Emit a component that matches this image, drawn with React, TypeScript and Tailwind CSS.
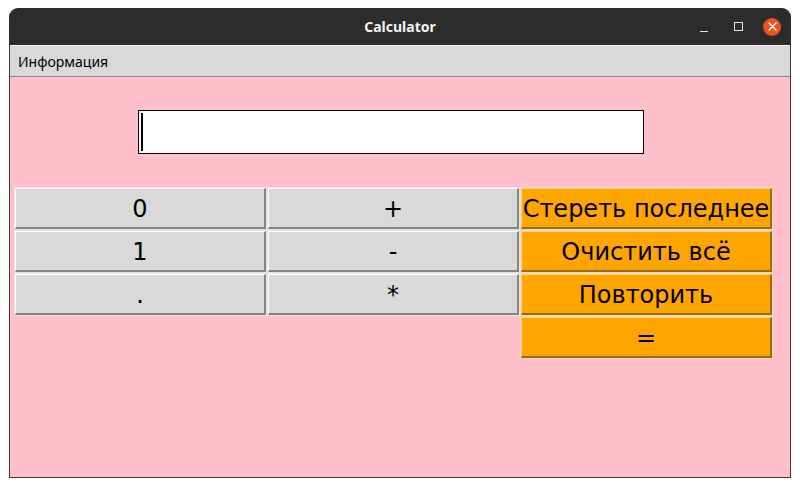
import React from 'react'

type Btn = { label: string; kind: 'gray' | 'orange' } | null

const cells: Btn[] = [
  { label: '0', kind: 'gray' },
  { label: '+', kind: 'gray' },
  { label: 'Стереть последнее', kind: 'orange' },
  { label: '1', kind: 'gray' },
  { label: '-', kind: 'gray' },
  { label: 'Очистить всё', kind: 'orange' },
  { label: '.', kind: 'gray' },
  { label: '*', kind: 'gray' },
  { label: 'Повторить', kind: 'orange' },
  null,
  null,
  { label: '=', kind: 'orange' },
]

function CalcButton({ btn }: { btn: Btn }) {
  if (!btn) return <div className="h-[43px]" />
  const orange = btn.kind === 'orange'
  return (
    <div className={`h-[43px] p-px ${orange ? 'bg-[#e4dcc4]' : 'bg-[#e8e4e4]'}`}>
      <button
        className={`w-full h-full flex items-center justify-center pt-[2px] text-[24px] text-black leading-none whitespace-nowrap overflow-hidden ${
          orange
            ? 'bg-[#ffa500] border-t border-l border-[#ffd27a] border-r-2 border-b-2 border-r-[#9c6a10] border-b-[#9c6a10]'
            : 'bg-[#d9d9d9] border-t border-l border-white border-r-2 border-b-2 border-r-[#858585] border-b-[#858585]'
        }`}
        style={{ fontFamily: '"DejaVu Sans", sans-serif' }}
      >
        {btn.label}
      </button>
    </div>
  )
}

export default function App() {
  return (
    <div className="w-[800px] h-[487px] bg-white pt-[8px] pl-[9px]">
      <div className="w-[782px] h-[470px] flex flex-col">
        <div className="h-[37px] bg-[#2c2c2c] rounded-t-[9px] relative flex items-center justify-center">
          <span
            className="text-[14px] font-bold text-[#f2f2f2]"
            style={{ fontFamily: '"Noto Sans", sans-serif' }}
          >
            Calculator
          </span>
          <div className="absolute right-[10px] top-0 h-full flex items-center gap-[20px]">
            <div className="w-[8px] h-px bg-[#e6e6e6] mt-[9px]" />
            <div className="w-[9px] h-[9px] border border-[#e6e6e6] ml-[6px]" />
            <div className="w-[18px] h-[18px] rounded-full bg-[#e95420] flex items-center justify-center">
              <svg width="9" height="9" viewBox="0 0 9 9">
                <path d="M1 1 L8 8 M8 1 L1 8" stroke="white" strokeWidth="1.4" strokeLinecap="round" />
              </svg>
            </div>
          </div>
        </div>
        <div className="flex-1 flex flex-col border-l border-r border-b border-[#3a3a3a]">
          <div className="h-[32px] bg-[#d9d9d9] border-t border-[#f0f0f0] border-b border-b-[#8a8a8a] flex items-center pl-[8px]">
            <span className="text-[14px] text-black" style={{ fontFamily: '"Noto Sans", sans-serif' }}>
              Информация
            </span>
          </div>
          <div className="flex-1 bg-[#ffc0cb]">
            <div className="ml-[128px] mt-[33px] w-[506px] h-[44px] bg-white border border-black flex items-center pl-[2px]">
              <div className="w-[2px] h-[38px] bg-black" />
            </div>
            <div className="ml-[4px] mt-[33px] grid grid-cols-[253px_253px_253px]">
              {cells.map((c, i) => (
                <CalcButton key={i} btn={c} />
              ))}
            </div>
          </div>
        </div>
      </div>
    </div>
  )
}
